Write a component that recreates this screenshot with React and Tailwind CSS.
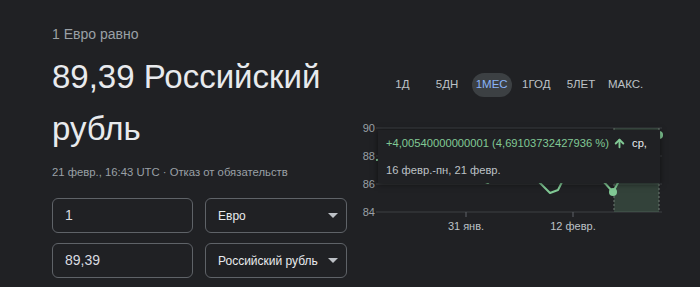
import React from 'react';
import { ArrowUp } from 'lucide-react';

const tabs = ['1Д', '5ДН', '1МЕС', '1ГОД', '5ЛЕТ', 'МАКС.'];

const linePts = [
    [16, 40], [40, 38], [70, 45], [100, 52], [128, 63], [140, 52], [160, 45],
    [177, 60], [190, 73], [198, 70], [203, 60], [215, 48], [230, 50], [242, 60],
    [253, 72], [265, 50], [280, 30], [299, 15]
];

const Chart = () => {
    const d = linePts.map((p, i) => `${i ? 'L' : 'M'}${p[0]} ${p[1]}`).join(' ');
    return (
        <svg width="320" height="118" viewBox="0 0 320 118" className="block" style={{ fontFamily: '"Liberation Sans", Arial, sans-serif' }}>
            {[['90', 8], ['88', 36], ['86', 64], ['84', 92]].map(([label, y]) => (
                <g key={label}>
                    <line x1="16" x2="302" y1={y} y2={y} stroke="#3c4043" strokeWidth="1" />
                    <text x="15" y={y + 4} textAnchor="end" fontSize="11" fill="#9aa0a6">{label}</text>
                </g>
            ))}
            <line x1="106" x2="106" y1="92" y2="97" stroke="#5f6368" />
            <line x1="213" x2="213" y1="92" y2="97" stroke="#5f6368" />
            <text x="106" y="110" textAnchor="middle" fontSize="11" fill="#bdc1c6">31 янв.</text>
            <text x="213" y="110" textAnchor="middle" fontSize="11" fill="#bdc1c6">12 февр.</text>
            <rect x="254" y="8" width="45" height="84" fill="rgba(129,201,149,0.2)" />
            <line x1="254" x2="254" y1="8" y2="92" stroke="#6f7a72" strokeDasharray="2 2" />
            <line x1="299" x2="299" y1="8" y2="92" stroke="#6f7a72" strokeDasharray="2 2" />
            <path d={d} fill="none" stroke="#81c995" strokeWidth="2" strokeLinejoin="round" />
            <circle cx="253" cy="72" r="4" fill="#81c995" />
            <circle cx="299" cy="15" r="4" fill="#81c995" />
        </svg>
    );
};

const Field = ({ value }) => (
    <div className="w-[141px] h-[35px] border border-[#5f6368] rounded-md flex items-center px-3 text-[14px] text-[#dadce0]">
        {value}
    </div>
);

const Select = ({ value }) => (
    <div className="w-[142px] h-[35px] border border-[#5f6368] rounded-md flex items-center justify-between pl-3 pr-[8px] text-[12px] text-[#e8eaed]">
        <span>{value}</span>
        <span className="w-0 h-0 border-l-[5px] border-r-[5px] border-t-[5px] border-l-transparent border-r-transparent border-t-[#bdc1c6]" />
    </div>
);

export default function App() {
    return (
        <div className="w-[700px] h-[287px] bg-[#202124] flex overflow-hidden" style={{ fontFamily: '"Liberation Sans", Arial, sans-serif' }}>
            <div className="w-[360px] pl-[52px] pt-[24px] flex flex-col">
                <div className="text-[14px] leading-[20px] text-[#9aa0a6]">1 Евро равно</div>
                <div className="mt-[7px] text-[33px] leading-[52px] text-[#e8eaed]">
                    89,39 Российский<br />рубль
                </div>
                <div className="mt-[9px] text-[11.3px] leading-[16px] text-[#9aa0a6]">
                    21 февр., 16:43 UTC · Отказ от обязательств
                </div>
                <div className="mt-[18px] flex flex-col gap-[10px]">
                    <div className="flex gap-[12px]">
                        <Field value="1" />
                        <Select value="Евро" />
                    </div>
                    <div className="flex gap-[12px]">
                        <Field value="89,39" />
                        <Select value="Российский рубль" />
                    </div>
                </div>
            </div>

            <div className="flex-1 relative">
                <div className="mt-[73px] ml-[20px] w-[268px] grid grid-cols-6 h-[24px] text-[11.5px] text-[#bdc1c6]">
                    {tabs.map((t) => (
                        <div key={t} className="flex items-center justify-center">
                            {t === '1МЕС' ? (
                                <span className="w-[40px] h-[24px] rounded-full bg-[#3c4043] text-[#8ab4f8] flex items-center justify-center">{t}</span>
                            ) : (
                                <span>{t}</span>
                            )}
                        </div>
                    ))}
                </div>
                <div className="mt-[23px]">
                    <Chart />
                </div>

                <div className="absolute left-[18px] top-[130px] w-[282px] h-[53px] bg-[#202124] shadow-[0_1px_6px_rgba(0,0,0,0.55)] px-[8px] pt-[5px] flex flex-col gap-[11px] text-[11.2px] leading-[16px]">
                    <div className="flex items-center whitespace-nowrap">
                        <span className="text-[#81c995]">+4,00540000000001 (4,69103732427936 %)</span>
                        <ArrowUp size={13} strokeWidth={3.5} className="text-[#81c995] ml-[4px]" />
                        <span className="ml-[6px] text-[#e8eaed]">ср,</span>
                    </div>
                    <div className="text-[#bdc1c6] whitespace-nowrap">16 февр.-пн, 21 февр.</div>
                </div>
            </div>
        </div>
    );
}
